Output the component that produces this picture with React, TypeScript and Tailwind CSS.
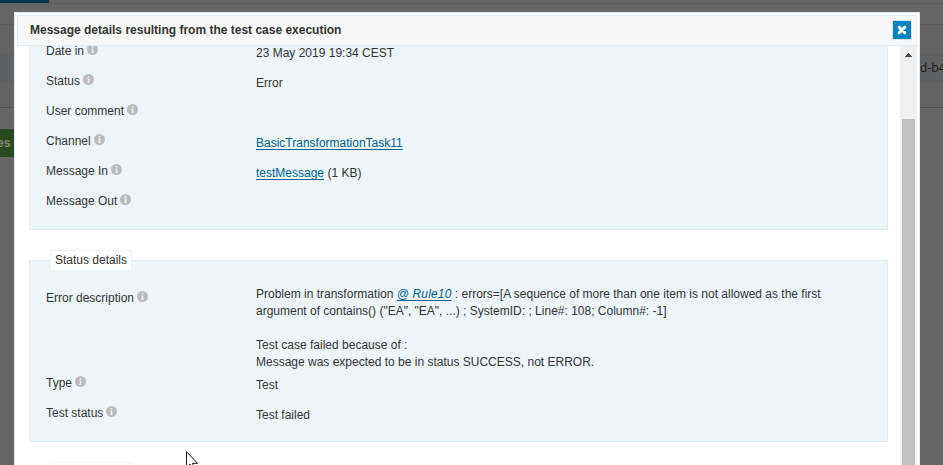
import type { ReactNode } from "react";

function InfoIcon() {
  return (
    <svg className="relative -top-[1.5px] ml-[3px] shrink-0" width="11" height="11" viewBox="0 0 11 11">
      <circle cx="5.5" cy="5.5" r="5.5" fill="#bbbbbb" />
      <path d="M4.8 2h1.5v1.4H4.8zM4.2 4.4h2.1v3.5h.6v.8H4.1v-.8h.7V5.2h-.6z" fill="#edf5f9" />
    </svg>
  );
}

function Label({ children }: { children: ReactNode }) {
  return (
    <div className="flex h-[30px] w-[226px] shrink-0 items-center pl-4 whitespace-nowrap">
      <span>{children}</span>
      <InfoIcon />
    </div>
  );
}

function Row({ label, children }: { label: string; children?: ReactNode }) {
  return (
    <div className="flex h-[30px] shrink-0">
      <Label>{label}</Label>
      <div className="pt-[9px] leading-4 whitespace-nowrap">{children}</div>
    </div>
  );
}

const link = "text-[#005f8c] underline underline-offset-[2px] decoration-1";

export default function App() {
  return (
    <div className="relative h-[465px] w-[943px] overflow-hidden bg-[#666] font-['Liberation_Sans',Arial,sans-serif] text-[12px] text-[#333]">
      <div className="flex h-full flex-col">
        <div className="h-1 shrink-0 border-b border-[#5f5f5f]">
          <div className="h-[3px] w-[49px] bg-[#003c58]" />
        </div>
        <div className="h-[21px] shrink-0 border-b border-[#5b5c5d]" />
        <div className="h-[30px] shrink-0 border-b border-[#5b5c5d] bg-[#636363]" />
        <div className="flex h-[27px] shrink-0 items-center justify-end border-b border-[#5b5c5d] bg-[#5f6163]">
          <span className="mb-px w-[23px] font-['Open_Sans',sans-serif] text-[12px] whitespace-nowrap text-[#171717]">d-b4</span>
        </div>
        <div className="h-[26px] shrink-0 border-b border-[#515151] bg-[#636363]" />
        <div className="mt-[21px] flex h-7 w-20 shrink-0 items-center bg-[#294a1e] font-bold text-[#858b82]">
          <span className="-ml-[3px]">es</span>
        </div>
      </div>

      <div className="absolute top-3 left-[14px] flex h-[470px] w-[906px] flex-col border border-[#dfeef6] bg-white px-[2px] pt-[2px]">
        <header className="flex h-[31px] shrink-0 items-center justify-between border border-[#dfeef6] bg-[#f8f8f8] pr-1 pb-px pl-3">
          <h1 className="pb-px text-[12px] font-bold">Message details resulting from the test case execution</h1>
          <button className="flex h-5 w-5 items-center justify-center border border-[#d5e4ec] bg-[#0782bc]">
            <svg width="10" height="10" viewBox="0 0 10 10" stroke="#fff" strokeWidth="3" strokeLinecap="round">
              <path d="M2.2 2.2l5.6 5.6M7.8 2.2l-5.6 5.6" />
            </svg>
          </button>
        </header>

        <div className="flex min-h-0 flex-1 overflow-hidden">
          <main className="flex min-w-0 flex-1 flex-col overflow-hidden pr-3 pl-3">
            <section className="-mt-[10px] h-[194px] shrink-0 border border-t-0 border-[#dfeef6] bg-[#edf5f9]">
              <Row label="Date in">23 May 2019 19:34 CEST</Row>
              <Row label="Status">Error</Row>
              <Row label="User comment" />
              <Row label="Channel">
                <a className={link}>BasicTransformationTask11</a>
              </Row>
              <Row label="Message In">
                <a className={link}>testMessage</a> (1 KB)
              </Row>
              <Row label="Message Out" />
            </section>

            <section className="mt-[30px] flex h-[182px] shrink-0 flex-col border border-[#dfeef6] bg-[#edf5f9]">
              <h2 className="-mt-[11px] ml-5 flex h-5 w-[82px] shrink-0 items-center justify-center border border-b-0 border-[#edf5f9] bg-white pb-[2px]">
                Status details
              </h2>
              <div className="mt-[13px] flex h-[85px] shrink-0">
                <Label>Error description</Label>
                <div className="pt-[3px] leading-[17px] whitespace-nowrap">
                  <p>
                    Problem in transformation <i className="tracking-[0.15px]"><a className={link}>@ Rule10</a></i> : errors=[A sequence of more than one item is not allowed as the first
                  </p>
                  <p>argument of contains() ("EA", "EA", ...) ; SystemID: ; Line#: 108; Column#: -1]</p>
                  <p className="mt-[17px]">Test case failed because of :</p>
                  <p>Message was expected to be in status SUCCESS, not ERROR.</p>
                </div>
              </div>
              <Row label="Type">Test</Row>
              <Row label="Test status">Test failed</Row>
            </section>
            <div className="mt-5 ml-[21px] h-5 w-[83px] shrink-0 border border-[#edf5f9] bg-white" />
          </main>

          <div className="flex w-[17px] shrink-0 flex-col items-center bg-[#f0f0f0]">
            <svg className="mt-[7px] shrink-0" width="7" height="4" viewBox="0 0 7 4" shapeRendering="crispEdges">
              <path d="M3 0h1v1h1v1h1v1h1v1H0V3h1V2h1V1h1z" fill="#505050" />
            </svg>
            <div className="mt-[62px] w-[13px] flex-1 bg-[#c1c1c1]" />
          </div>
        </div>
      </div>

      <svg className="absolute top-[451px] left-[186px]" width="13" height="19" viewBox="0 0 13 19">
        <path d="M.5.7v16l3.7-3.6 2.4 5.4 2.2-1-2.3-5.2h5z" fill="#fff" stroke="#111827" strokeWidth="1" />
      </svg>
    </div>
  );
}
